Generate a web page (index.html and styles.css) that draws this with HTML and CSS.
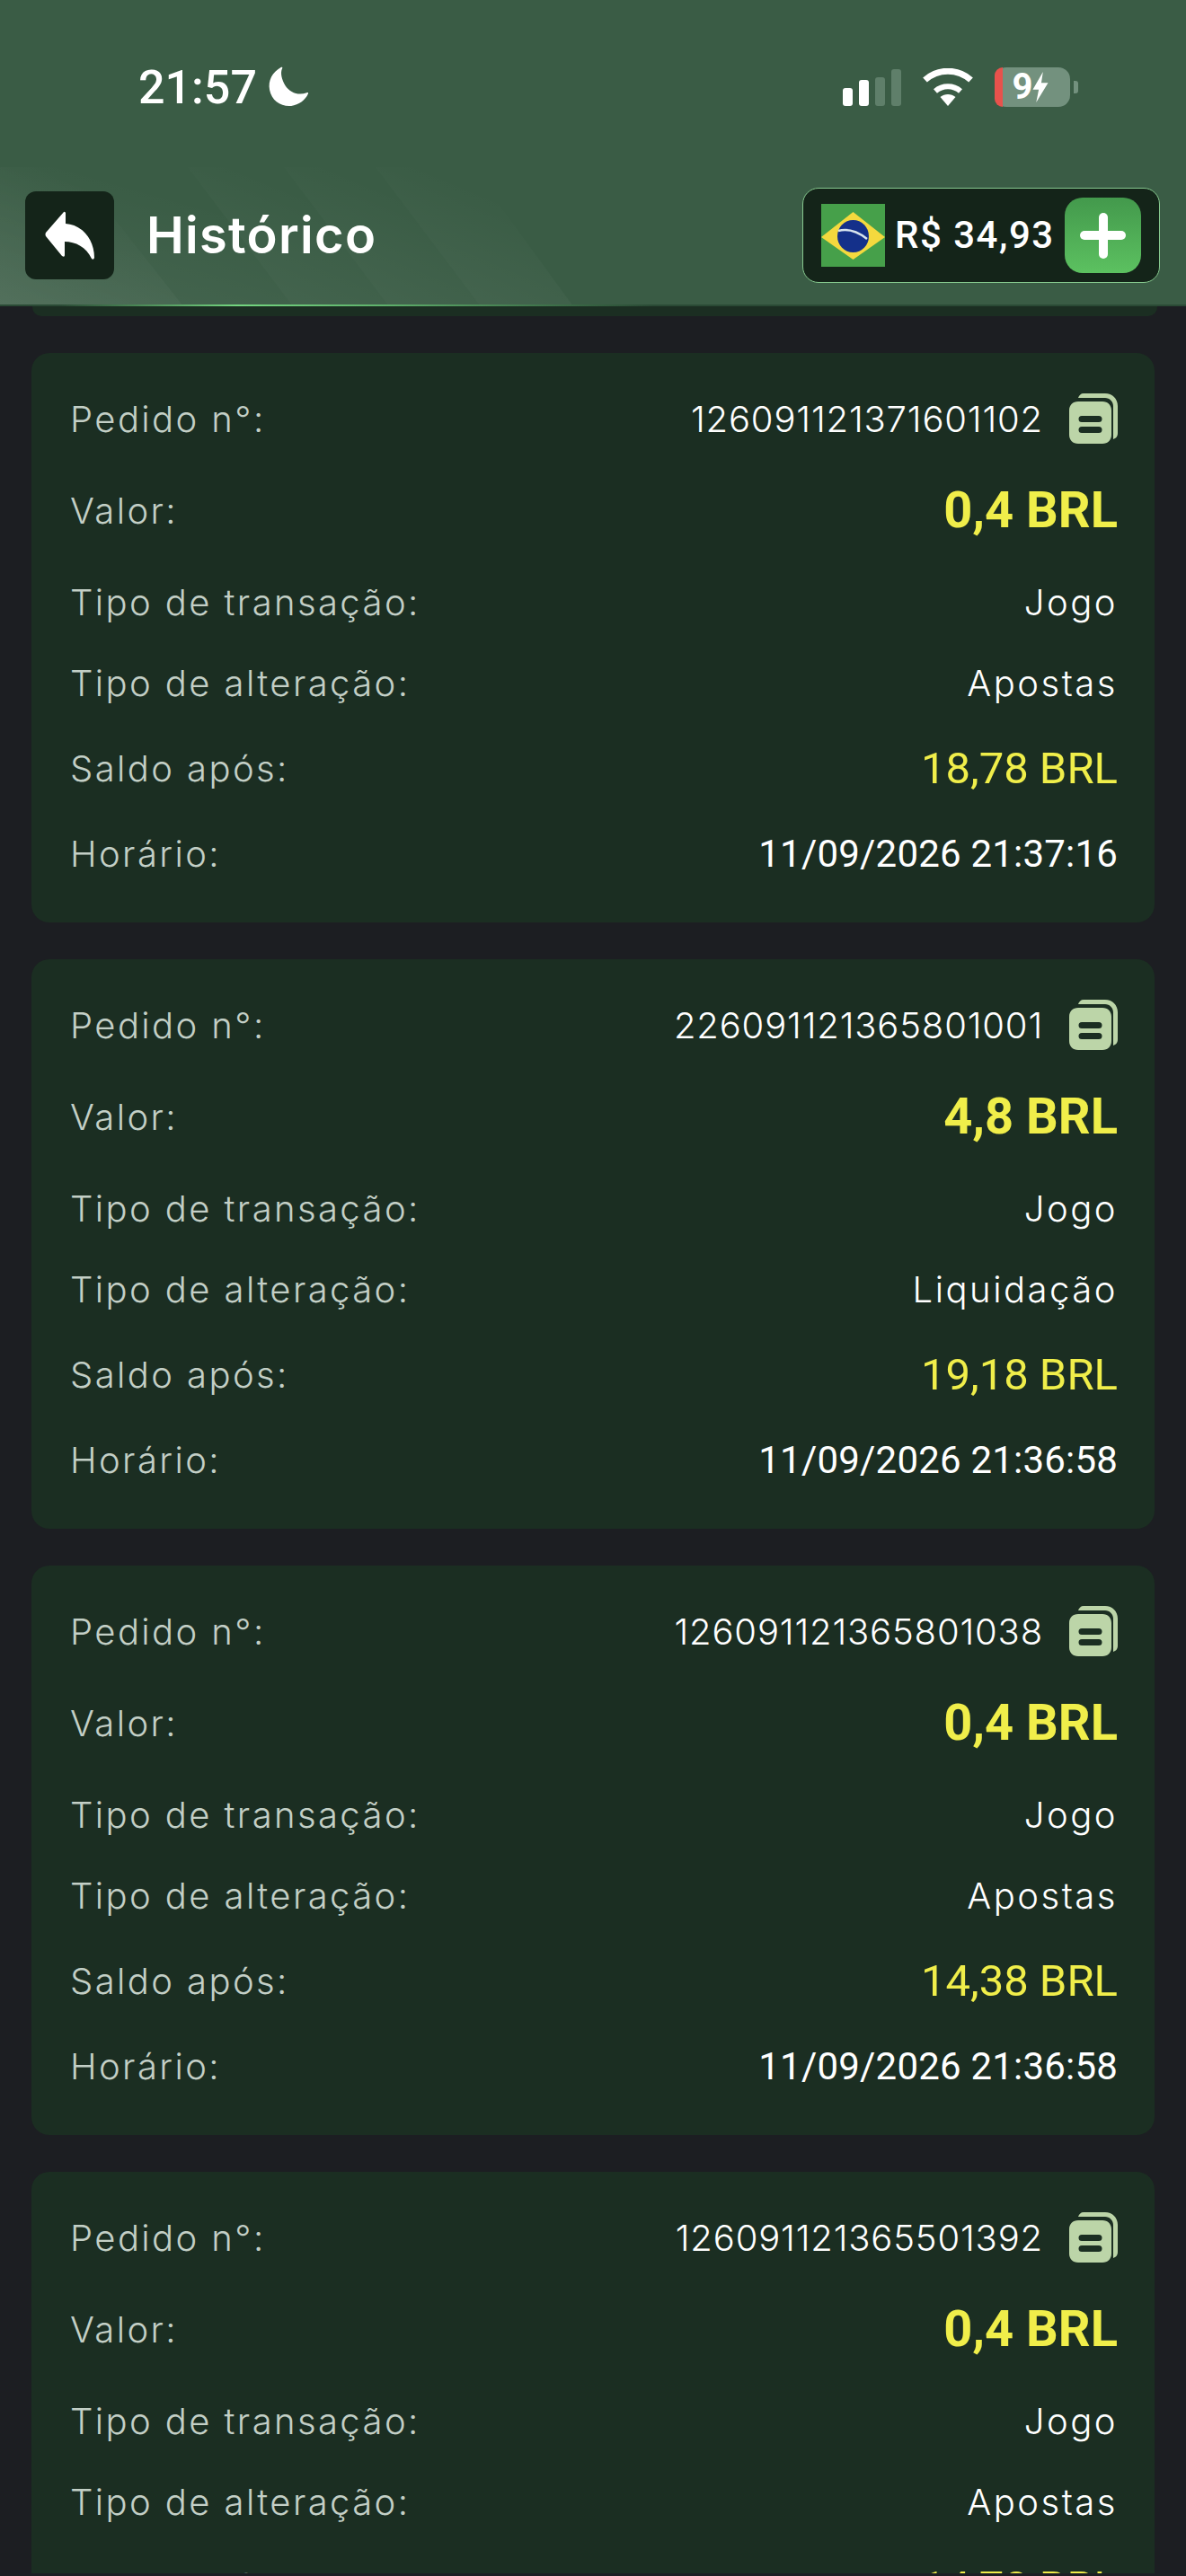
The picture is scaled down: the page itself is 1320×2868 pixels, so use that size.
FILE: index.html
```html
<!DOCTYPE html>
<html lang="en">
<head>
    <meta charset="UTF-8">
    <meta name="viewport" content="width=device-width, initial-scale=1.0">
    <title>Histórico</title>
    <link rel="stylesheet" href="styles.css">
</head>
<body>
    <div id="page">
        <header class="top">
            <svg class="stripes" viewBox="0 0 1320 155" preserveAspectRatio="none">
                <defs>
                    <linearGradient id="fade" x1="0" y1="1" x2="0.6" y2="0">
                        <stop offset="0" stop-color="#fff" stop-opacity="0.065"></stop>
                        <stop offset="0.85" stop-color="#fff" stop-opacity="0"></stop>
                    </linearGradient>
                </defs>
                <polygon fill="url(#fade)" points="0,0 82,0 204,155 0,155"></polygon>
                <polygon fill="url(#fade)" points="0,0 209,0 326,155 0,155"></polygon>
                <polygon fill="url(#fade)" points="209,0 316,0 433,155 326,155"></polygon>
                <polygon fill="url(#fade)" points="316,0 418,0 535,155 433,155"></polygon>
                <polygon fill="url(#fade)" points="418,0 525,0 638,155 535,155"></polygon>
            </svg>
            <div class="status">
                <div class="clock">
                    <span>21:57</span>
                    <svg class="moon" viewBox="0 0 44 44"><path d="M14 1C5 6 0 15 2 25c2 11 12 18 23 17 8-1 15-6 18-13 .5-1.200-.5-1.500-1.500-1-9 3-18 0-23-8C15 14 13 7 15.500 2c.5-1-.5-1.500-1.500-1z"/></svg>
                </div>
                <div class="sys">
                    <div class="bars">
                        <i class="b1"></i><i class="b2"></i><i class="b3"></i><i class="b4"></i>
                    </div>
                    <svg class="wifi" viewBox="0 0 58 42">
                        <path d="M29 42l-8.500-10c4.800-4 12.200-4 17 0z" fill="#fff"/>
                        <path d="M15 25.500C23 18.500 35 18.500 43 25.500" fill="none" stroke="#fff" stroke-width="6"/>
                        <path d="M3.500 13C18 0 40 0 54.500 13" fill="none" stroke="#fff" stroke-width="7"/>
                    </svg>
                    <div class="batt">
                        <div class="batt-body"><i class="batt-low"></i><span>9</span><svg class="bolt" viewBox="0 0 18 36"><path d="M12 0L0 21h7l-3 15L18 13h-8z"/></svg></div>
                        <i class="batt-tip"></i>
                    </div>
                </div>
            </div>
            <div class="bar">
                <div class="back">
                    <svg viewBox="0 0 56 54"><path d="M21 1L1 24q-1 2 0 4l18 22q3 2 3-1V34c12 0 24 6 30 19q2 2 3-1C55 30 40 15 23 14V2q-1-2-2-1z"/></svg>
                </div>
                <h1>Histórico</h1>
                <div class="wallet">
                    <svg class="flag" viewBox="0 0 71 70">
                        <rect width="71" height="70" fill="#46a04a"/>
                        <polygon points="35.500,9 71,37 35.500,62 0,37" fill="#f4d93e"/>
                        <ellipse cx="35.500" cy="36" rx="17.500" ry="18" fill="#14308a"/>
                        <path d="M19 30c11-3 22 1 32 9" fill="none" stroke="#d8e4ee" stroke-width="2.500"/>
                    </svg>
                    <span class="money">R$ 34,93</span>
                    <div class="plus"><i></i></div>
                </div>
            </div>
        </header>
        <div class="strip"></div>

        <main class="list">
            <section class="card">
                <div class="row r1"><span class="lab">Pedido n°:</span><span class="val id">126091121371601102<svg class="copy" viewBox="0 0 54 56"><path d="M16 0h24c8 0 14 6 14 14v30c0 4-2 6-5 7V14c0-5-4-9-9-9H10c1-3 3-5 6-5z"/><path fill-rule="evenodd" d="M10 9h27c6 0 10 4 10 10v27c0 6-4 10-10 10H10C4 56 0 52 0 46V19C0 13 4 9 10 9zm4 16a3.500 3.500 0 000 7h19a3.500 3.500 0 000-7zm0 12a3.500 3.500 0 000 7h19a3.500 3.500 0 000-7z"/></svg></span></div>
                <div class="row r2"><span class="lab">Valor:</span><span class="val amount">0,4 BRL</span></div>
                <div class="row r3"><span class="lab">Tipo de transação:</span><span class="val">Jogo</span></div>
                <div class="row r4"><span class="lab">Tipo de alteração:</span><span class="val">Apostas</span></div>
                <div class="row r5"><span class="lab">Saldo após:</span><span class="val saldo">18,78 BRL</span></div>
                <div class="row r6"><span class="lab">Horário:</span><span class="val date">11/09/2026 21:37:16</span></div>
            </section>
            <section class="card">
                <div class="row r1"><span class="lab">Pedido n°:</span><span class="val id">226091121365801001<svg class="copy" viewBox="0 0 54 56"><path d="M16 0h24c8 0 14 6 14 14v30c0 4-2 6-5 7V14c0-5-4-9-9-9H10c1-3 3-5 6-5z"/><path fill-rule="evenodd" d="M10 9h27c6 0 10 4 10 10v27c0 6-4 10-10 10H10C4 56 0 52 0 46V19C0 13 4 9 10 9zm4 16a3.500 3.500 0 000 7h19a3.500 3.500 0 000-7zm0 12a3.500 3.500 0 000 7h19a3.500 3.500 0 000-7z"/></svg></span></div>
                <div class="row r2"><span class="lab">Valor:</span><span class="val amount">4,8 BRL</span></div>
                <div class="row r3"><span class="lab">Tipo de transação:</span><span class="val">Jogo</span></div>
                <div class="row r4"><span class="lab">Tipo de alteração:</span><span class="val">Liquidação</span></div>
                <div class="row r5"><span class="lab">Saldo após:</span><span class="val saldo">19,18 BRL</span></div>
                <div class="row r6"><span class="lab">Horário:</span><span class="val date">11/09/2026 21:36:58</span></div>
            </section>
            <section class="card">
                <div class="row r1"><span class="lab">Pedido n°:</span><span class="val id">126091121365801038<svg class="copy" viewBox="0 0 54 56"><path d="M16 0h24c8 0 14 6 14 14v30c0 4-2 6-5 7V14c0-5-4-9-9-9H10c1-3 3-5 6-5z"/><path fill-rule="evenodd" d="M10 9h27c6 0 10 4 10 10v27c0 6-4 10-10 10H10C4 56 0 52 0 46V19C0 13 4 9 10 9zm4 16a3.500 3.500 0 000 7h19a3.500 3.500 0 000-7zm0 12a3.500 3.500 0 000 7h19a3.500 3.500 0 000-7z"/></svg></span></div>
                <div class="row r2"><span class="lab">Valor:</span><span class="val amount">0,4 BRL</span></div>
                <div class="row r3"><span class="lab">Tipo de transação:</span><span class="val">Jogo</span></div>
                <div class="row r4"><span class="lab">Tipo de alteração:</span><span class="val">Apostas</span></div>
                <div class="row r5"><span class="lab">Saldo após:</span><span class="val saldo">14,38 BRL</span></div>
                <div class="row r6"><span class="lab">Horário:</span><span class="val date">11/09/2026 21:36:58</span></div>
            </section>
            <section class="card">
                <div class="row r1"><span class="lab">Pedido n°:</span><span class="val id">126091121365501392<svg class="copy" viewBox="0 0 54 56"><path d="M16 0h24c8 0 14 6 14 14v30c0 4-2 6-5 7V14c0-5-4-9-9-9H10c1-3 3-5 6-5z"/><path fill-rule="evenodd" d="M10 9h27c6 0 10 4 10 10v27c0 6-4 10-10 10H10C4 56 0 52 0 46V19C0 13 4 9 10 9zm4 16a3.500 3.500 0 000 7h19a3.500 3.500 0 000-7zm0 12a3.500 3.500 0 000 7h19a3.500 3.500 0 000-7z"/></svg></span></div>
                <div class="row r2"><span class="lab">Valor:</span><span class="val amount">0,4 BRL</span></div>
                <div class="row r3"><span class="lab">Tipo de transação:</span><span class="val">Jogo</span></div>
                <div class="row r4"><span class="lab">Tipo de alteração:</span><span class="val">Apostas</span></div>
                <div class="row r5"><span class="lab">Saldo após:</span><span class="val saldo">14,78 BRL</span></div>
            </section>
        </main>
    </div>
</body>
</html>
```
FILE: styles.css
```css
* {
    box-sizing: border-box;
}
html, body {
    margin: 0;
    padding: 0;
}
#page {
    position: relative;
    width: 1320px;
    height: 2868px;
    overflow: hidden;
    background: #1c1e22;
    font-family: "Inter", "Liberation Sans", sans-serif;
}
#page::after {
    content: "";
    position: absolute;
    left: 0;
    bottom: 0;
    width: 100%;
    height: 3px;
    background: #1c1e22;
}

/* header */
.top {
    position: relative;
    height: 341px;
    background: #3a5c45;
}
.top::after {
    content: "";
    position: absolute;
    left: 0;
    bottom: 0;
    width: 100%;
    height: 2px;
    background: linear-gradient(90deg, #2a4a35 5%, #74d680 20%, #5fb26c 32%, #2a4a35 55%);
}
.stripes {
    position: absolute;
    left: 0;
    top: 186px;
    width: 1320px;
    height: 155px;
}
.status {
    position: relative;
    display: flex;
    justify-content: space-between;
    align-items: center;
    height: 194px;
    padding: 0 120px 0 154px;
}
.clock {
    display: flex;
    align-items: center;
    gap: 12px;
    font: 500 52px "Roboto", sans-serif;
    color: #fff;
}
.moon {
    width: 46px;
    height: 46px;
    fill: #fff;
}
.sys {
    display: flex;
    align-items: center;
    gap: 23px;
}
.bars {
    display: flex;
    align-items: flex-end;
    gap: 7px;
    height: 41px;
}
.bars i {
    display: block;
    width: 11px;
    border-radius: 3px;
    background: #fff;
}
.bars .b1 { height: 20px; }
.bars .b2 { height: 29px; }
.bars .b3 { height: 32px; background: #5f7f6a; }
.bars .b4 { height: 41px; background: #5f7f6a; }
.wifi {
    width: 58px;
    height: 42px;
}
.batt {
    display: flex;
    align-items: center;
    gap: 4px;
}
.batt-body {
    position: relative;
    display: flex;
    align-items: center;
    justify-content: center;
    width: 84px;
    height: 44px;
    padding-right: 4px;
    border-radius: 13px;
    background: #73917e;
    font: 700 40px/44px "Roboto", sans-serif;
    color: #fff;
}
.batt-low {
    position: absolute;
    left: 0;
    top: 0;
    width: 9px;
    height: 100%;
    border-radius: 13px 0 0 13px;
    background: #e8524c;
}
.bolt {
    width: 18px;
    height: 34px;
    fill: #fff;
}
.batt-tip {
    display: block;
    width: 5px;
    height: 14px;
    border-radius: 0 3px 3px 0;
    background: #73917e;
}
.bar {
    position: relative;
    display: flex;
    align-items: center;
    height: 145px;
    padding: 0 29px 10px 28px;
}
.back {
    display: flex;
    align-items: center;
    justify-content: center;
    width: 99px;
    height: 98px;
    border-radius: 12px;
    background: #142419;
}
.back svg {
    width: 56px;
    height: 54px;
    fill: #fff;
}
h1 {
    margin: 0 0 0 36px;
    font: 600 56px "Inter", sans-serif;
    letter-spacing: 1.300px;
    color: #fff;
}
.wallet {
    display: flex;
    align-items: center;
    width: 398px;
    height: 106px;
    margin-left: auto;
    padding: 0 20px;
    border: 1.500px solid #86c88e;
    border-radius: 18px;
    background: #142419;
}
.flag {
    width: 71px;
    height: 70px;
    flex-shrink: 0;
}
.money {
    margin-left: 11px;
    font: 500 42px "Roboto", sans-serif;
    letter-spacing: 1.500px;
    color: #fff;
    white-space: nowrap;
}
.plus {
    position: relative;
    width: 85px;
    height: 84px;
    margin-left: auto;
    flex-shrink: 0;
    border-radius: 20px;
    background: linear-gradient(#43994c, #5cc160);
}
.plus::before, .plus i {
    content: "";
    position: absolute;
    background: #fff;
    border-radius: 5px;
}
.plus::before {
    left: 17px;
    top: 37px;
    width: 51px;
    height: 10px;
}
.plus i {
    left: 38px;
    top: 17px;
    width: 10px;
    height: 51px;
}
.strip {
    height: 11px;
    margin: 0 32px 0 36px;
    border-radius: 0 0 10px 10px;
    background: #1b2e22;
}

/* cards */
.list {
    display: flex;
    flex-direction: column;
    gap: 41px;
    padding: 41px 35px 0;
}
.card {
    flex-shrink: 0;
    height: 634px;
    padding: 47px 41px 0 43px;
    border-radius: 20px;
    background: #1b2e22;
}
.row {
    display: flex;
    justify-content: space-between;
    align-items: center;
    height: 52px;
}
.r2 { margin-top: 50px; }
.r3 { margin-top: 50px; }
.r4 { margin-top: 38px; }
.r5 { margin-top: 43px; }
.r6 { margin-top: 43px; }
.lab {
    font: 300 40px "Inter", sans-serif;
    letter-spacing: 2.400px;
    color: #c3cfc6;
}
.val {
    display: flex;
    align-items: center;
    font: 300 40px "Inter", sans-serif;
    letter-spacing: 2.500px;
    color: #fff;
}
.id {
    letter-spacing: 0.850px;
}
.copy {
    width: 54px;
    height: 56px;
    margin-left: 29px;
    fill: #bcd5a8;
}
.amount {
    font: 700 56px "Roboto", sans-serif;
    letter-spacing: 0;
    color: #f0ee4a;
}
.saldo {
    font: 400 49px "Roboto", sans-serif;
    letter-spacing: 0;
    color: #f0ee4a;
}
.date {
    font: 400 42px "Roboto", sans-serif;
    letter-spacing: 0.200px;
}
```
